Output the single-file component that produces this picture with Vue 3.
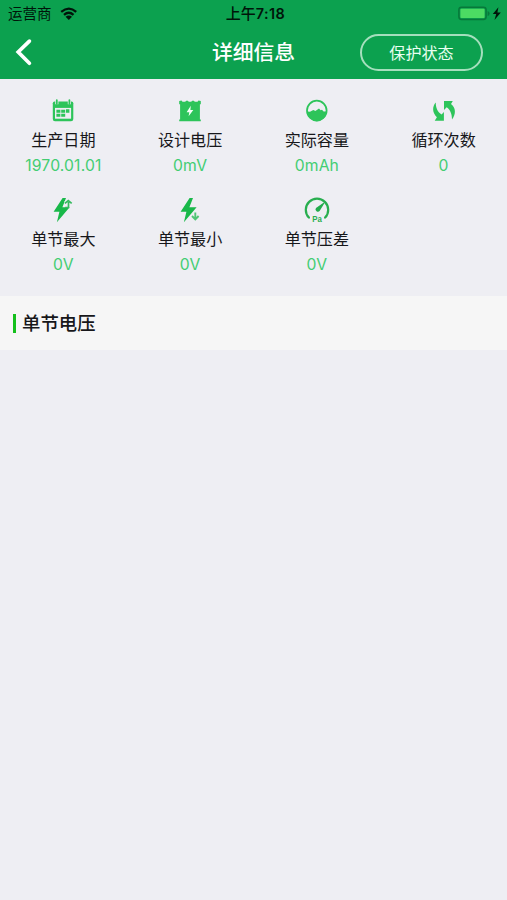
<script setup>
const items = [
  { icon: 'calendar', label: '生产日期', value: '1970.01.01' },
  { icon: 'battery', label: '设计电压', value: '0mV' },
  { icon: 'capacity', label: '实际容量', value: '0mAh' },
  { icon: 'cycle', label: '循环次数', value: '0' },
  { icon: 'max', label: '单节最大', value: '0V' },
  { icon: 'min', label: '单节最小', value: '0V' },
  { icon: 'gauge', label: '单节压差', value: '0V' },
]
</script>

<template>
  <div class="screen">
    <header class="top">
      <div class="status">
        <div class="carrier">
          <span>运营商</span>
          <svg class="wifi" width="18" height="14" viewBox="0 0 18 14">
            <path d="M1.2 4.8Q9-1.6 16.2 4.8M4 7.8Q8.8 3.7 13.5 7.8" fill="none" stroke="#00150a" stroke-width="2.3" />
            <path d="M5.6 9.8Q8.8 7.2 12 9.8L8.8 13Z" fill="#00150a" />
          </svg>
        </div>
        <div class="time">上午<b>7:18</b></div>
        <div class="power">
          <svg width="45" height="16" viewBox="0 0 45 16">
            <rect x=".9" y="1.2" width="27.2" height="12.2" rx="2.6" fill="none" stroke="#07783a" stroke-width="1.5" />
            <rect x="2.4" y="2.7" width="24.2" height="9.2" rx="1" fill="#4cdb63" />
            <path d="M29.6 4.9q2 .5 2 2.5t-2 2.5z" fill="#07783a" />
            <path d="M40.4 1.2L34.8 8.1H38.2L36.5 14L42.8 6.4H39.4Z" fill="#00150a" />
          </svg>
        </div>
      </div>
      <nav class="nav">
        <div class="side">
          <svg class="back" width="18" height="28" viewBox="0 0 18 28">
            <path d="M14.4 3.1L3.2 14L14.4 25.3" fill="none" stroke="#fff" stroke-width="3.7" stroke-linecap="round" stroke-linejoin="miter" />
          </svg>
        </div>
        <h1>详细信息</h1>
        <div class="side end"><button class="protect">保护状态</button></div>
      </nav>
    </header>

    <section class="grid">
      <div v-for="item in items" :key="item.icon" class="cell">
        <svg class="icon" width="26" height="26" viewBox="0 0 26 26">
          <g v-if="item.icon === 'calendar'">
            <path d="M4.5 3.5H21.5Q23.3 3.5 23.3 5.3V21Q23.3 23.2 21 23.2H5Q2.8 23.2 2.8 21V5.3Q2.8 3.5 4.5 3.5Z" fill="#2dc45a" />
            <path d="M5 9.9H21.1V20.7H5Z" fill="#eeeef3" />
            <path d="M6.8 2V6.2M19.4 2V6.2" stroke="#eeeef3" stroke-width="3.2" />
            <path d="M6.8 2.2V5.8M19.4 2.2V5.8" stroke="#2dc45a" stroke-width="1.8" stroke-linecap="round" />
            <path d="M6.4 11.8H10.4V14.8H6.4ZM11.2 11.8H15.2V14.8H11.2ZM16 11.2H19.4V14.8H16ZM6.4 15.8H10.4V18.8H6.4ZM11.2 15.8H15.2V18.8H11.2Z" fill="#2dc45a" />
          </g>
          <g v-else-if="item.icon === 'battery'">
            <path d="M2.2 3L4.5 2.6L5.5 3.8H8.2L9.2 2.8H10.8L11.8 3.8H14.2L15.2 2.8H16.8L17.8 3.8H20.5L21.5 2.6L23.8 3V6.2H22.9V21.4H23.8V23.2H2.2V21.4H3.1V6.2H2.2Z" fill="#2dc45a" />
            <path d="M13.8 7.8L9.6 14.2H12.3L11.6 18.3L16.3 11.9H13.4Z" fill="#f3fff6" />
          </g>
          <g v-else-if="item.icon === 'capacity'">
            <circle cx="12.8" cy="12.5" r="9.8" fill="none" stroke="#2dc45a" stroke-width="1.8" />
            <path d="M3 13.6L6 13.8L9.3 11.9L11.4 13.1L15 10.4L16.6 12.2L18 11.8L19.6 13.6H22.6A9.8 9.8 0 0 1 3 13.6Z" fill="#2dc45a" />
          </g>
          <g v-else-if="item.icon === 'cycle'" fill="#2dc45a">
            <path d="M4.8 4.6C1 8.6 1.2 15 5.9 19.2L3.7 22.8H12.9V14L10.6 16.6C6.9 14.5 4.6 10 4.8 4.6Z" />
            <path d="M13 2.9H21.8L20 6C24.9 9.5 25.2 16 21 21.6C21 16.4 19.4 11.6 15.7 9.2L13 12Z" />
          </g>
          <g v-else-if="item.icon === 'max'">
            <path d="M12.6 1L3.6 14.8H9.4L6.9 25.3L19.6 10.3H12.4L16 1Z" fill="#18b849" />
            <path d="M17.9 9V5.5M14.9 6.2L18.2 3.4L21.5 6.2" fill="none" stroke="#eeeef3" stroke-width="3" />
            <path d="M15.2 10.5H18.5V5M14.9 6.4L18.3 3.6L21.7 6.4" fill="none" stroke="#35ba5e" stroke-width="1.7" />
          </g>
          <g v-else-if="item.icon === 'min'">
            <path d="M12.6 1L3.6 14.8H9.4L6.9 25.3L19.6 10.3H12.4L16 1Z" fill="#18b849" />
            <path d="M18.2 14.6V23" stroke="#eeeef3" stroke-width="3" />
            <path d="M18.3 15.6V22.3M15 19L18.3 22.4L21.6 19" fill="none" stroke="#4fc575" stroke-width="1.9" />
          </g>
          <g v-else>
            <path d="M4.9 20.6A11.2 11.2 0 1 1 21.1 20.6" fill="none" stroke="#28ae4f" stroke-width="2.2" stroke-linecap="round" />
            <path d="M21.6 4.3L15.8 13.7A2.3 2.3 0 1 1 12 10.9Z" fill="#22ac4c" />
            <text x="8.2" y="25.2" textLength="9.6" lengthAdjust="spacingAndGlyphs" class="pa">Pa</text>
          </g>
        </svg>
        <div class="label">{{ item.label }}</div>
        <div class="value">{{ item.value }}</div>
      </div>
    </section>

    <section class="section-head">
      <i class="bar"></i>
      <h2>单节电压</h2>
    </section>
  </div>
</template>

<style>
body {
  background: #eeeef3;
}
</style>

<style scoped>
.screen {
  min-height: 900px;
  background: #eeeef3;
  font-family: Inter, "Noto Sans CJK SC", sans-serif;
  color: #17171a;
}
.top {
  height: 79px;
  background: #0ca14f;
}
.status {
  height: 27px;
  display: grid;
  grid-template-columns: 1fr auto 1fr;
  align-items: center;
  padding: 0 4px 0 8px;
  box-sizing: border-box;
  color: #00150a;
  font-size: 14.5px;
  line-height: 27px;
}
.carrier {
  display: flex;
  align-items: center;
  gap: 8px;
}
.time {
  font-weight: 500;
  font-size: 15px;
}
.time b {
  font-weight: 600;
  font-size: 14.4px;
  letter-spacing: 0.4px;
}
.power {
  display: flex;
  justify-content: flex-end;
}
.nav {
  height: 50px;
  display: grid;
  grid-template-columns: 1fr auto 1fr;
  align-items: center;
  padding: 0 24px 0 15px;
}
.side {
  display: flex;
}
.end {
  justify-content: flex-end;
}
h1 {
  margin: 2px 0 0 9px;
  color: #fff;
  font-size: 20.8px;
  font-weight: 500;
  line-height: 30px;
}
.protect {
  width: 123px;
  height: 37px;
  padding: 0;
  box-sizing: border-box;
  border: 2px solid #a5dfbd;
  border-radius: 19px;
  background: transparent;
  color: #e9fff1;
  font: inherit;
  font-size: 16.1px;
}
.grid {
  display: grid;
  grid-template-columns: repeat(4, 1fr);
  grid-auto-rows: 99px;
  height: 198px;
  padding: 19px 0 0;
}
.cell {
  display: flex;
  flex-direction: column;
  align-items: center;
}
.icon {
  display: block;
}
.label {
  margin-top: 4px;
  font-size: 16.1px;
  line-height: 25px;
}
.value {
  height: 25px;
  font-size: 15.7px;
  letter-spacing: 0.15px;
  line-height: 25px;
  color: #43cd72;
}
.pa {
  font: 700 9.6px "Liberation Sans", sans-serif;
  fill: #28ae4f;
}
.section-head {
  height: 54px;
  display: flex;
  align-items: center;
  gap: 6px;
  padding-left: 13px;
  background: #f6f6f6;
}
.bar {
  width: 3px;
  height: 19px;
  background: #14c01c;
}
h2 {
  margin: 0;
  font-size: 18.4px;
  font-weight: 500;
  line-height: 28px;
}
</style>
